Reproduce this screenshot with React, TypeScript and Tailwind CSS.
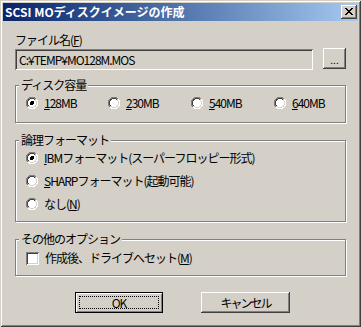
import React from "react";

const font = "font-['Noto_Sans_CJK_JP',sans-serif]";

function Radio({ checked }: { checked?: boolean }) {
  return (
    <span className="relative w-[12px] h-[12px] shrink-0">
      <svg width="12" height="12" viewBox="0 0 12 12" shapeRendering="crispEdges">
        <circle cx="6" cy="6" r="5.5" fill="#ffffff" />
        <path d="M10 2 A5.5 5.5 0 0 0 2 10" stroke="#808080" strokeWidth="1" fill="none" />
        <path d="M9.2 2.8 A4.5 4.5 0 0 0 2.8 9.2" stroke="#404040" strokeWidth="1" fill="none" />
        <path d="M2 10 A5.5 5.5 0 0 0 10 2" stroke="#ffffff" strokeWidth="1" fill="none" />
        <path d="M2.8 9.2 A4.5 4.5 0 0 0 9.2 2.8" stroke="#d4d0c8" strokeWidth="1" fill="none" />
        {checked && <circle cx="6" cy="6" r="2" fill="#000000" />}
      </svg>
    </span>
  );
}

function RadioItem({ checked, children, className = "" }: { checked?: boolean; children: React.ReactNode; className?: string }) {
  return (
    <div className={`flex items-center h-[14px] gap-[6px] ${className}`}>
      <Radio checked={checked} />
      <span className="whitespace-nowrap">{children}</span>
    </div>
  );
}

function Group({ label, className = "", children }: { label: string; className?: string; children: React.ReactNode }) {
  return (
    <div
      className={`relative w-[331px] border border-[#808080] shadow-[1px_1px_0_#ffffff,inset_1px_1px_0_#ffffff] ${className}`}
    >
      <span className="absolute left-[3px] top-[-8px] px-[2px] bg-[#d4d0c8] leading-[14px] whitespace-nowrap">
        {label}
      </span>
      {children}
    </div>
  );
}

export default function App() {
  return (
    <div
      className={`${font} text-[12px] leading-[14px] text-black w-[361px] h-[327px] bg-[#d4d0c8] p-[3px] flex flex-col shadow-[inset_1px_1px_0_#d4d0c8,inset_-1px_-1px_0_#404040,inset_2px_2px_0_#ffffff,inset_-2px_-2px_0_#808080]`}
    >
      {/* Title bar */}
      <div className="h-[18px] flex items-center justify-between bg-gradient-to-r from-[#0a246a] to-[#a6caf0] pl-[2px] pr-[1px]">
        <span className="text-white font-bold text-[12px] leading-[14px] whitespace-nowrap">
          SCSI MOディスクイメージの作成
        </span>
        <div className="w-[16px] h-[14px] bg-[#d4d0c8] flex items-center justify-center shadow-[inset_-1px_-1px_0_#404040,inset_1px_1px_0_#ffffff,inset_-2px_-2px_0_#808080]">
          <svg width="8" height="7" viewBox="0 0 8 7" shapeRendering="crispEdges" className="mb-[1px]">
            <path
              fill="#000"
              d="M0 0h2v1H0zM6 0h2v1H6zM1 1h2v1H1zM5 1h2v1H5zM2 2h4v1H2zM3 3h2v1H3zM2 4h4v1H2zM1 5h2v1H1zM5 5h2v1H5zM0 6h2v1H0zM6 6h2v1H6z"
            />
          </svg>
        </div>
      </div>

      <div className="pl-[12px] flex flex-col tracking-[-1px]">
        {/* File name */}
        <div className="mt-[12px] h-[14px] whitespace-nowrap">
          ファイル名(<u>F</u>)
        </div>
        <div className="mt-[2px] flex items-start">
          <div className="w-[298px] h-[21px] flex items-center pl-[4px] tracking-[-1px] shadow-[inset_1px_1px_0_#808080,inset_-1px_-1px_0_#ffffff,inset_2px_2px_0_#404040,inset_-2px_-2px_0_#d4d0c8]">
            C:¥TEMP¥MO128M.MOS
          </div>
          <div className="ml-[10px] -mt-[1px] w-[23px] h-[21px] flex items-end justify-center pb-[4px] text-[10px] leading-[10px] tracking-normal shadow-[inset_-1px_-1px_0_#404040,inset_1px_1px_0_#ffffff,inset_-2px_-2px_0_#808080]">
            ...
          </div>
        </div>

        {/* Disk capacity */}
        <Group label="ディスク容量" className="mt-[15px] h-[38px] pt-[10px] pl-[10px]">
          <div className="flex">
            <RadioItem checked className="w-[82px]">
              <u>1</u>28MB
            </RadioItem>
            <RadioItem className="w-[83px]">
              <u>2</u>30MB
            </RadioItem>
            <RadioItem className="w-[83px]">
              <u>5</u>40MB
            </RadioItem>
            <RadioItem>
              <u>6</u>40MB
            </RadioItem>
          </div>
        </Group>

        {/* Logical format */}
        <Group label="論理フォーマット" className="mt-[17px] h-[82px] pt-[10px] pl-[10px]">
          <div className="flex flex-col gap-[9px]">
            <RadioItem checked>
              <u>I</u>BMフォーマット(スーパーフロッピー形式)
            </RadioItem>
            <RadioItem>
              <u>S</u>HARPフォーマット(起動可能)
            </RadioItem>
            <RadioItem>
              なし(<u>N</u>)
            </RadioItem>
          </div>
        </Group>

        {/* Other options */}
        <Group label="その他のオプション" className="mt-[17px] h-[37px] pt-[11px] pl-[10px]">
          <div className="flex items-center h-[14px] gap-[6px]">
            <span className="w-[13px] h-[13px] bg-white shrink-0 shadow-[inset_1px_1px_0_#808080,inset_-1px_-1px_0_#ffffff,inset_2px_2px_0_#404040,inset_-2px_-2px_0_#d4d0c8]" />
            <span className="whitespace-nowrap">
              作成後、ドライブへセット(<u>M</u>)
            </span>
          </div>
        </Group>

        {/* Buttons */}
        <div className="mt-[16px] flex">
          <div className="ml-[60px] w-[88px] h-[21px] border border-black p-[3px] flex shadow-[inset_1px_1px_0_#ffffff,inset_-1px_-1px_0_#808080]">
            <span className="flex-1 border border-dotted border-black flex items-center justify-center">
              OK
            </span>
          </div>
          <div className="ml-[38px] w-[89px] h-[21px] flex items-center justify-center tracking-[-2px] shadow-[inset_-1px_-1px_0_#404040,inset_1px_1px_0_#ffffff,inset_-2px_-2px_0_#808080]">
            キャンセル
          </div>
        </div>
      </div>
    </div>
  );
}
